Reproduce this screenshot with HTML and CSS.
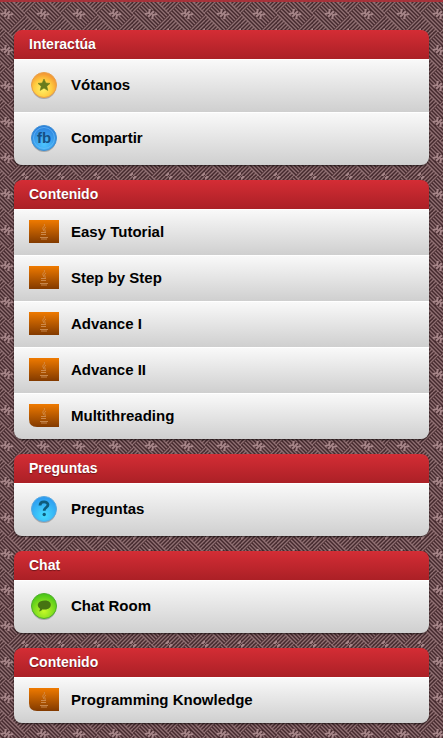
FILE: index.html
```
<!DOCTYPE html>
<html lang="es">
<head>
    <meta charset="UTF-8">
    <meta name="viewport" content="width=device-width, initial-scale=1.0">
    <title>Tutorial</title>
    <link rel="stylesheet" href="styles.css">
</head>
<body>
    <!-- Shared icons -->
    <svg class="defs" width="0" height="0" aria-hidden="true">
        <defs>
            <linearGradient id="orange" x1="0" y1="0" x2="0" y2="1">
                <stop offset="0" stop-color="#ef7a00"/>
                <stop offset="1" stop-color="#823a00"/>
            </linearGradient>
            <radialGradient id="yellow" cx=".45" cy=".65" r=".6">
                <stop offset="0" stop-color="#fff36a"/>
                <stop offset=".6" stop-color="#ffcb3e"/>
                <stop offset="1" stop-color="#f49a35"/>
            </radialGradient>
            <radialGradient id="blue" cx=".5" cy=".75" r=".7">
                <stop offset="0" stop-color="#4cc4ff"/>
                <stop offset="1" stop-color="#2b7fdc"/>
            </radialGradient>
            <radialGradient id="sky" cx=".5" cy=".75" r=".7">
                <stop offset="0" stop-color="#45dcff"/>
                <stop offset="1" stop-color="#2e9cf0"/>
            </radialGradient>
            <radialGradient id="green" cx=".5" cy=".7" r=".7">
                <stop offset="0" stop-color="#c8fa28"/>
                <stop offset="1" stop-color="#44c417"/>
            </radialGradient>
            <symbol id="java" viewBox="0 0 30 23">
                <g fill="none" stroke="#d9a06c" stroke-width="1" opacity=".7">
                    <path d="M15 4c2 2-2 3-1 5l1 2M17 7c-3 2 0 3-1 5"/>
                    <path d="M12 12.500h5M12 14.500h5M11 17.500h8M12 19h6"/>
                </g>
            </symbol>
        </defs>
    </svg>

    <main class="page">
        <section class="card">
            <h2>Interactúa</h2>
            <ul>
                <li><a class="tall" href="#votanos">
                    <svg class="icon" viewBox="0 0 30 30" aria-hidden="true">
                        <ellipse cx="15" cy="17" rx="12" ry="12" fill="#777" opacity=".5"/>
                        <circle cx="15" cy="15" r="12.500" fill="url(#yellow)" stroke="#e9a04a"/>
                        <path d="M15 9l1.800 4 4.200.4-3.200 2.800 1 4.200-3.800-2.300-3.800 2.300 1-4.200L9 13.400l4.200-.4z" fill="#687b1d" stroke="#687b1d" stroke-width=".6"/>
                    </svg>
                    Vótanos
                </a></li>
                <li><a class="tall" href="#compartir">
                    <svg class="icon" viewBox="0 0 30 30" aria-hidden="true">
                        <ellipse cx="15" cy="17" rx="12" ry="12" fill="#777" opacity=".5"/>
                        <circle cx="15" cy="15" r="12.500" fill="url(#blue)" stroke="#3e8fd4"/>
                        <circle cx="15" cy="15" r="10.500" fill="none" stroke="#6fc3fa" opacity=".6"/>
                        <text class="glyph fb" x="15" y="20" fill="#164f83">fb</text>
                    </svg>
                    Compartir
                </a></li>
            </ul>
        </section>

        <section class="card">
            <h2>Contenido</h2>
            <ul>
                <li><a href="#easy"><svg class="thumb" viewBox="0 0 30 23" aria-hidden="true"><path d="M0 0h30v23H0z" fill="url(#orange)"/><use href="#java"/></svg>Easy Tutorial</a></li>
                <li><a href="#step"><svg class="thumb" viewBox="0 0 30 23" aria-hidden="true"><path d="M0 0h30v23H0z" fill="url(#orange)"/><use href="#java"/></svg>Step by Step</a></li>
                <li><a href="#advance-1"><svg class="thumb" viewBox="0 0 30 23" aria-hidden="true"><path d="M0 0h30v23H0z" fill="url(#orange)"/><use href="#java"/></svg>Advance I</a></li>
                <li><a href="#advance-2"><svg class="thumb" viewBox="0 0 30 23" aria-hidden="true"><path d="M0 0h30v23H0z" fill="url(#orange)"/><use href="#java"/></svg>Advance II</a></li>
                <li><a href="#multithreading"><svg class="thumb" viewBox="0 0 30 23" aria-hidden="true"><path d="M0 0h30v23H8q-8 0-8-8z" fill="url(#orange)"/><use href="#java"/></svg>Multithreading</a></li>
            </ul>
        </section>

        <section class="card">
            <h2>Preguntas</h2>
            <ul>
                <li><a class="tall" href="#preguntas">
                    <svg class="icon" viewBox="0 0 30 30" aria-hidden="true">
                        <ellipse cx="15" cy="17" rx="12" ry="12" fill="#777" opacity=".5"/>
                        <circle cx="15" cy="15" r="12.500" fill="url(#sky)" stroke="#58a9e0"/>
                        <path d="M11 11.500c0-5 8-4.500 8-.8 0 2.800-3.800 2.800-3.800 6" fill="none" stroke="#0e5c7c" stroke-width="2.800"/>
                        <circle cx="15.200" cy="20.500" r="1.700" fill="#0e5c7c"/>
                    </svg>
                    Preguntas
                </a></li>
            </ul>
        </section>

        <section class="card">
            <h2>Chat</h2>
            <ul>
                <li><a class="tall" href="#chat">
                    <svg class="icon" viewBox="0 0 30 30" aria-hidden="true">
                        <ellipse cx="15" cy="17" rx="12" ry="12" fill="#777" opacity=".5"/>
                        <circle cx="15" cy="15" r="12.500" fill="url(#green)" stroke="#4fae2b"/>
                        <path d="M16 9.500c8 0 7.500 9 0 9-1 0-2 0-2.500-.3-1 1.500-2 2-3.500 2 .8-.8 1-1.700.8-2.700C6.500 14 9.500 9.500 16 9.500z" fill="#467412"/>
                    </svg>
                    Chat Room
                </a></li>
            </ul>
        </section>

        <section class="card">
            <h2>Contenido</h2>
            <ul>
                <li><a href="#programming"><svg class="thumb" viewBox="0 0 30 23" aria-hidden="true"><path d="M0 0h30v23H8q-8 0-8-8z" fill="url(#orange)"/><use href="#java"/></svg>Programming Knowledge</a></li>
            </ul>
        </section>
    </main>
</body>
</html>
```
FILE: styles.css
```
* {
    box-sizing: border-box;
}

body {
    margin: 0;
    border-top: 2px solid #a8323a;
    font-family: "Liberation Sans", Arial, sans-serif;
    background-color: #452a2e;
    /* woven key pattern: one set of diagonals, with a block of the other set over it */
    background-image: url("data:image/svg+xml,%3Csvg xmlns='http://www.w3.org/2000/svg' width='36' height='36' viewBox='0 0 36 36'%3E%3Cg fill='none' stroke='%238f6f72' stroke-width='1.400'%3E%3Cpath d='M0 4L4 0M0 8L8 0M0 12L12 0M0 16L16 0M0 20L20 0M0 24L24 0M0 28L28 0M0 32L32 0M0 36L36 0M4 36L36 4M8 36L36 8M12 36L36 12M16 36L36 16M20 36L36 20M24 36L36 24M28 36L36 28M32 36L36 32'/%3E%3Cpath d='M18 0L36 18L18 36L0 18z' fill='%23452a2e' stroke='none'/%3E%3Cpath d='M18 0L36 18M16 2L34 20M14 4L32 22M12 6L20 14M22 16L30 24M10 8L16 14M22 20L28 26M8 10L14 16M20 22L26 28M6 12L14 20M16 22L24 30M4 14L22 32M2 16L20 34M0 18L18 36'/%3E%3C/g%3E%3Cpath d='M12 18l4-1 1-4M15 21l6-6M24 18l-4 1-1 4M0 3l3-3M33 36l3-3' fill='none' stroke='%23a78689' stroke-width='2'/%3E%3C/svg%3E");
    background-position: 25px 32px;
}

.defs {
    position: absolute;
}

.page {
    display: flex;
    flex-direction: column;
    gap: 15px;
    padding: 28px 14px 15px;
}

.card {
    border-radius: 8px;
    overflow: hidden;
    box-shadow: 0 1px 2px rgba(0, 0, 0, 0.6);
}

.card h2 {
    margin: 0;
    padding: 0 15px;
    font-size: 14px;
    line-height: 29px;
    color: #fff;
    background: linear-gradient(#d42d35, #ab2026);
    text-shadow: 0 1px 1px rgba(0, 0, 0, 0.4);
}

.card ul {
    margin: 0;
    padding: 0;
    list-style: none;
}

.card a {
    display: flex;
    align-items: center;
    gap: 12px;
    height: 46px;
    padding: 0 15px 2px;
    border-top: 1px solid #fff;
    font-size: 15px;
    font-weight: bold;
    line-height: 20px;
    color: #000;
    text-decoration: none;
    background: linear-gradient(#f9f9f9, #cfcfcf);
}

.card a.tall {
    height: 53px;
    padding-bottom: 3px;
}

.icon {
    width: 30px;
    height: 30px;
}

.thumb {
    width: 30px;
    height: 23px;
}

.glyph {
    font-weight: bold;
    text-anchor: middle;
}

.fb {
    font-size: 15px;
}
```
